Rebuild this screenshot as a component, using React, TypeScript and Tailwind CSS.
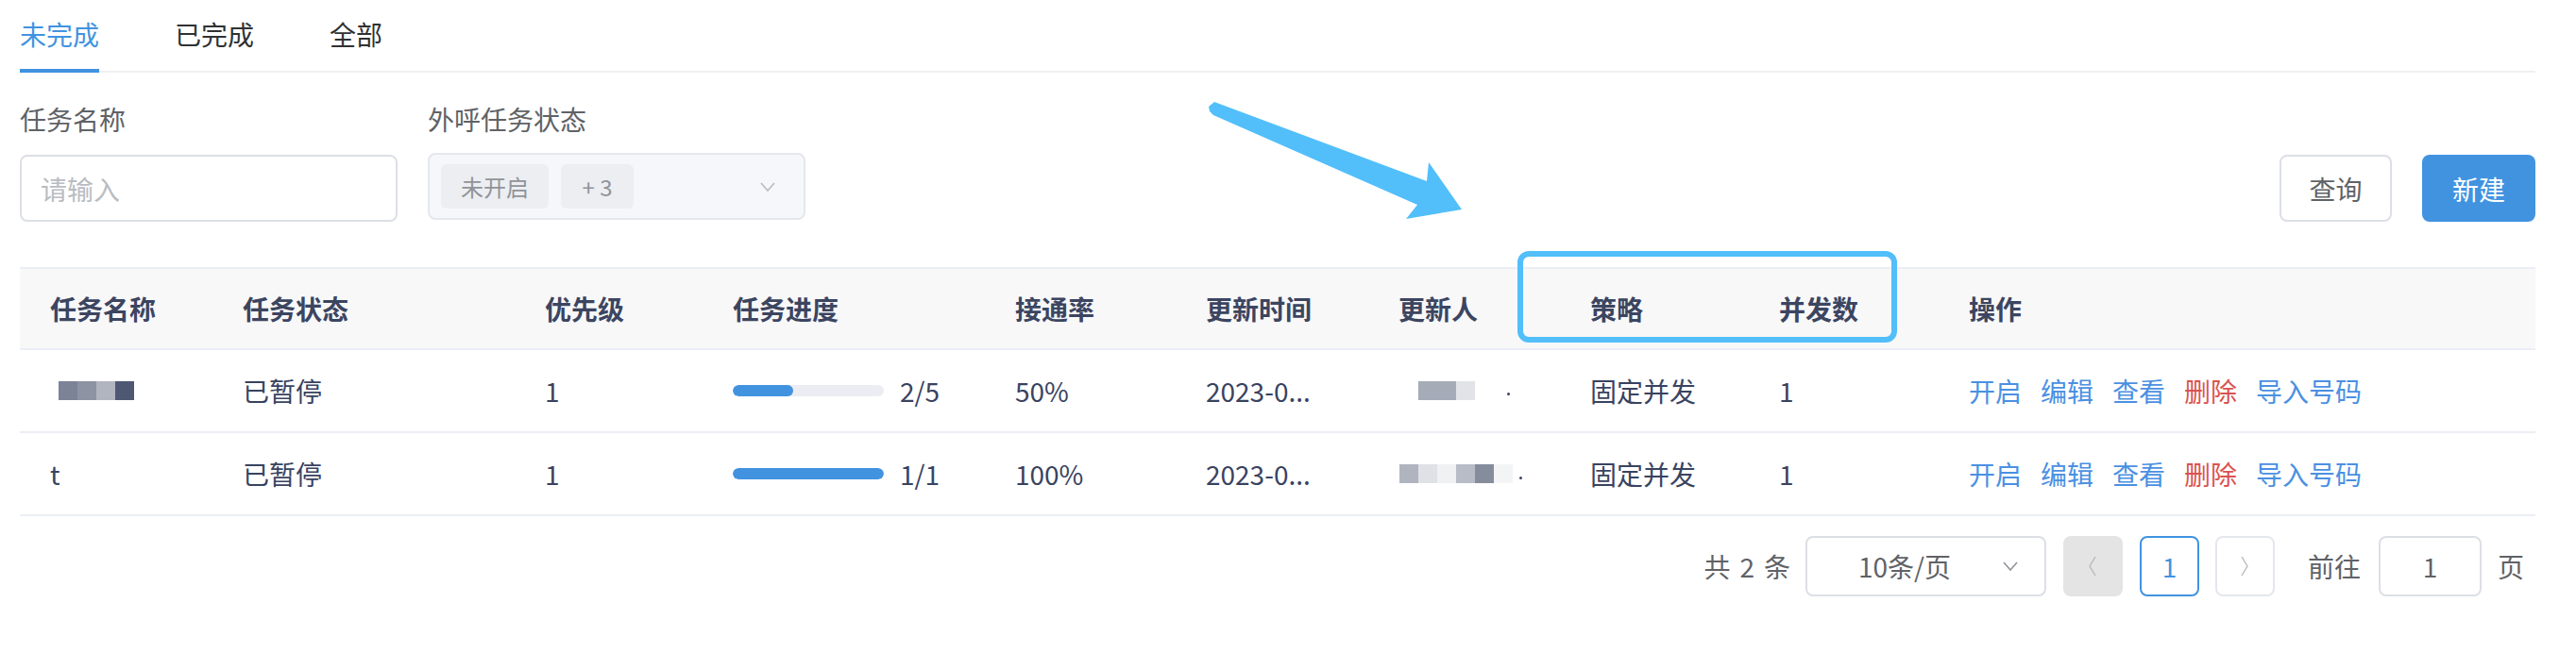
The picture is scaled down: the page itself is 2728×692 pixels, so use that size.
import React from "react";

const FONT = "font-['Noto_Sans_CJK_SC','Noto_Sans',sans-serif]";

function Chevron({ dir, className }: { dir: "down" | "left" | "right"; className?: string }) {
  if (dir === "down")
    return (
      <svg width="16" height="10" viewBox="0 0 16 10" className={className}>
        <polyline points="1,1 8,9 15,1" fill="none" stroke="currentColor" strokeWidth="1.6" />
      </svg>
    );
  if (dir === "left")
    return (
      <svg width="10" height="22" viewBox="0 0 10 22" className={className}>
        <polyline points="8,1 2,11 8,21" fill="none" stroke="currentColor" strokeWidth="1.4" />
      </svg>
    );
  return (
    <svg width="10" height="22" viewBox="0 0 10 22" className={className}>
      <polyline points="2,1 8,11 2,21" fill="none" stroke="currentColor" strokeWidth="1.4" />
    </svg>
  );
}

function Blocks({ colors }: { colors: string[] }) {
  return (
    <span className="inline-flex">
      {colors.map((c, i) => (
        <span key={i} className="inline-block w-[20px] h-[20px]" style={{ backgroundColor: c }} />
      ))}
    </span>
  );
}

function Progress({ pct, label }: { pct: number; label: string }) {
  return (
    <div className="flex items-center">
      <div className="w-[160px] h-[12px] rounded-full bg-[#ebedf2] overflow-hidden">
        <div className="h-full rounded-full bg-[#4193e0]" style={{ width: `${pct}%` }} />
      </div>
      <span className="ml-[17px]">{label}</span>
    </div>
  );
}

const gridCols =
  "grid grid-cols-[202px_320px_199px_299px_202px_204px_203px_200px_201px_518px_116px]";

const headers = ["任务名称", "任务状态", "优先级", "任务进度", "接通率", "更新时间", "更新人", "策略", "并发数", "操作", ""];

function Actions() {
  return (
    <div className="flex gap-[20px]">
      <span className="text-[#4a90e2]">开启</span>
      <span className="text-[#4a90e2]">编辑</span>
      <span className="text-[#4a90e2]">查看</span>
      <span className="text-[#d9534f]">删除</span>
      <span className="text-[#4a90e2]">导入号码</span>
    </div>
  );
}

export default function App() {
  const rows: React.ReactNode[][] = [
    [
      <span className="ml-[9px] flex">
        <Blocks colors={["#7c8397", "#8d93a3", "#b1b5c0", "#4e5873"]} />
      </span>,
      "已暂停",
      "1",
      <Progress pct={40} label="2/5" />,
      "50%",
      "2023-0...",
      <span className="relative flex items-center ml-[21px]">
        <Blocks colors={["#a6abb8", "#a6abb8", "#e1e3e8"]} />
        <span className="ml-[34px] mt-[6px] w-[3px] h-[3px] bg-[#394360] rounded-full" />
      </span>,
      "固定并发",
      "1",
      <Actions />,
      "",
    ],
    [
      <span>t</span>,
      "已暂停",
      "1",
      <Progress pct={100} label="1/1" />,
      "100%",
      "2023-0...",
      <span className="relative flex items-center ml-[1px]">
        <Blocks colors={["#b0b4bf", "#dfe1e6", "#f0f1f3", "#b8bcc6", "#858c9c", "#f3f4f6"]} />
        <span className="ml-[7px] mt-[8px] w-[3px] h-[3px] bg-[#394360] rounded-full" />
      </span>,
      "固定并发",
      "1",
      <Actions />,
      "",
    ],
  ];

  return (
    <div className={`relative w-[2728px] h-[692px] bg-white overflow-hidden pl-[21px] pr-[43px] ${FONT}`}>
      {/* Tabs */}
      <div className="relative h-[77px] border-b-2 border-[#f0f0f2] flex gap-[80px] text-[28px]">
        <div className="relative h-full flex items-center pb-[4px] text-[#4193e0]">
          未完成
          <div className="absolute left-0 right-0 bottom-[-2px] h-[4px] bg-[#4193e0]" />
        </div>
        <div className="h-full flex items-center pb-[4px] text-[#303133]">已完成</div>
        <div className="h-full flex items-center pb-[4px] text-[#303133]">全部</div>
      </div>

      {/* Filters */}
      <div className="flex items-end justify-between pt-[29px]">
        <div className="flex gap-[32px]">
          <div className="w-[400px]">
            <div className="h-[40px] leading-[40px] text-[28px] text-[#606266] mb-[18px]">任务名称</div>
            <div className="h-[71px] rounded-[8px] border-2 border-[#dcdfe6] flex items-center pl-[20px] text-[28px] text-[#b9bcc2]">
              请输入
            </div>
          </div>
          <div className="w-[400px]">
            <div className="h-[40px] leading-[40px] text-[28px] text-[#606266] mb-[16px]">外呼任务状态</div>
            <div className="h-[71px] rounded-[8px] border-2 border-[#e4e7ed] bg-[#f5f7fa] flex items-center pl-[12px] pr-[30px]">
              <span className="h-[47px] px-[21px] rounded-[6px] bg-[#eceef2] flex items-center text-[24px] text-[#909399]">
                未开启
              </span>
              <span className="ml-[13px] h-[47px] w-[77px] rounded-[6px] bg-[#eceef2] flex items-center justify-center text-[24px] text-[#909399]">
                + 3
              </span>
              <Chevron dir="down" className="ml-auto text-[#b8bbc1]" />
            </div>
          </div>
        </div>
        <div className="flex gap-[32px]">
          <button className="w-[119px] h-[71px] rounded-[8px] border-2 border-[#dcdfe6] bg-white text-[28px] text-[#606266]">
            查询
          </button>
          <button className="w-[120px] h-[71px] rounded-[8px] bg-[#4193e0] text-[28px] text-white">新建</button>
        </div>
      </div>

      {/* Table */}
      <div className="mt-[48px] text-[28px]">
        <div className={`${gridCols} h-[88px] border-y-2 border-[#ebeef5] bg-[#f8f8f9] font-bold text-[#3c4560]`}>
          {headers.map((h, i) => (
            <div key={i} className={`flex items-center ${i === 0 ? "pl-[32px]" : "pl-[34px]"}`}>
              {h}
            </div>
          ))}
        </div>
        {rows.map((r, ri) => (
          <div key={ri} className={`${gridCols} h-[88px] border-b-2 border-[#ebeef5] text-[#394360]`}>
            {r.map((c, i) => (
              <div key={i} className={`flex items-center whitespace-nowrap ${i === 0 ? "pl-[32px]" : "pl-[34px]"}`}>
                {c}
              </div>
            ))}
          </div>
        ))}
      </div>

      {/* Pagination */}
      <div className="flex justify-end items-center mt-[21px] pr-[12px] text-[28px] text-[#606266]">
        <span className="flex gap-[10px]">
          <span>共</span>
          <span>2</span>
          <span>条</span>
        </span>
        <div className="ml-[16px] w-[255px] h-[64px] rounded-[8px] border-2 border-[#dcdfe6] flex items-center pl-[54px] pr-[28px]">
          <span>10条/页</span>
          <Chevron dir="down" className="ml-auto text-[#909399]" />
        </div>
        <div className="ml-[18px] w-[63px] h-[64px] rounded-[8px] bg-[#e4e4e4] flex items-center justify-center text-[#b6b9bf]">
          <Chevron dir="left" />
        </div>
        <div className="ml-[18px] w-[63px] h-[64px] rounded-[8px] border-2 border-[#4193e0] flex items-center justify-center text-[#4193e0]">
          1
        </div>
        <div className="ml-[17px] w-[63px] h-[64px] rounded-[8px] border-2 border-[#e4e7ed] flex items-center justify-center text-[#b6b9bf]">
          <Chevron dir="right" />
        </div>
        <span className="ml-[35px]">前往</span>
        <div className="ml-[19px] w-[109px] h-[64px] rounded-[8px] border-2 border-[#dcdfe6] flex items-center justify-center">
          1
        </div>
        <span className="ml-[17px]">页</span>
      </div>

      {/* Annotation: highlight box */}
      <div className="absolute left-[1607px] top-[266px] w-[402px] h-[97px] rounded-[12px] border-[6px] border-[#52bffa] pointer-events-none" />

      {/* Annotation: arrow */}
      <svg className="absolute inset-0 pointer-events-none" width="2728" height="692" viewBox="0 0 2728 692">
        <polygon
          points="1286,108 1511,192 1513,172 1548,222 1489,232 1501,217 1285,122 1281,118 1280,113"
          fill="#52bffa"
        />
      </svg>
    </div>
  );
}
